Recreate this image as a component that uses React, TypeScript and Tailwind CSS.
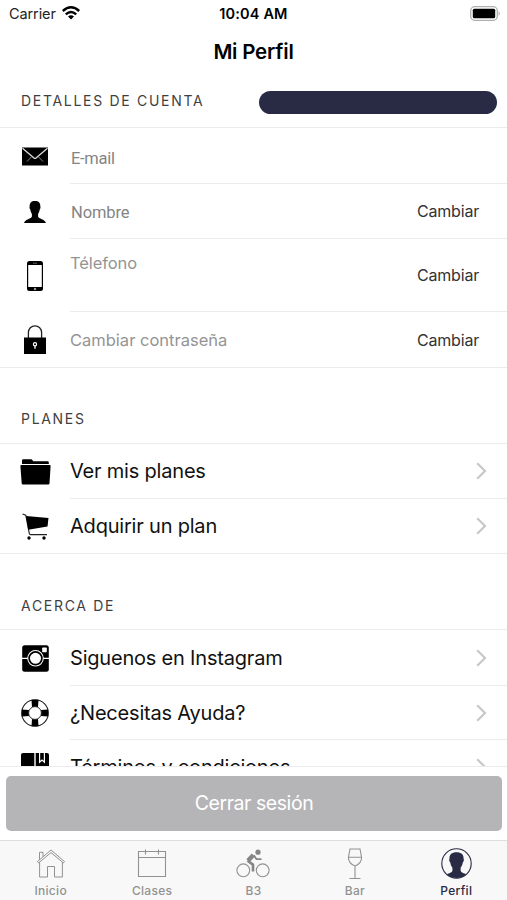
import type { ReactNode } from 'react';

function MailIcon() {
  return (
    <svg className="w-7 h-[19px]" viewBox="0 0 28 19">
      <rect x="1" y="0.5" width="26" height="18" fill="#000" />
      <path d="M1.5 1.2L13 11Q14 11.8 15 11L26.5 1.2" fill="none" stroke="#ddd" strokeWidth="1.3" />
      <path d="M6 14.5L10.5 9.8M22 14.5L17.5 9.8" fill="none" stroke="#999" strokeWidth="0.9" />
    </svg>
  );
}

function PersonShape({ fill }: { fill: string }) {
  return (
    <path
      d="M11 0C7.2 0 5.5 2 5.7 5.5C5.3 6 5.5 7.8 6.3 8.6C6.6 10.6 7.2 12 7.9 13V15.4C7.6 18 1 17.8 0 22H22C21 17.8 14.4 18 14.1 15.4V13C14.8 12 15.4 10.6 15.7 8.6C16.5 7.8 16.7 6 16.3 5.5C16.5 2 14.8 0 11 0Z"
      fill={fill}
    />
  );
}

function PersonIcon() {
  return (
    <svg className="w-[22px] h-[22px]" viewBox="0 0 22 22">
      <PersonShape fill="#000" />
    </svg>
  );
}

function PhoneIcon() {
  return (
    <svg className="w-4 h-[30px]" viewBox="0 0 16 30">
      <rect width="16" height="30" rx="2.5" fill="#000" />
      <rect x="1.2" y="4" width="13.6" height="22" fill="#fff" />
      <path d="M6 2.2H10" stroke="#777" strokeWidth="0.8" />
      <circle cx="8" cy="28" r="1.2" fill="#999" />
    </svg>
  );
}

function LockIcon() {
  return (
    <svg className="w-[22px] h-[29px]" viewBox="0 0 22 29">
      <path d="M4.4 13V7.5A6.6 6.6 0 0 1 17.6 7.5V13" fill="none" stroke="#222" strokeWidth="1.3" />
      <rect y="12.5" width="22" height="16.5" fill="#000" />
      <circle cx="11" cy="19.3" r="1.6" fill="none" stroke="#fff" strokeWidth="1.2" />
      <path d="M11 20.8V23.8" stroke="#fff" strokeWidth="1.3" />
    </svg>
  );
}

function FolderIcon() {
  return (
    <svg className="w-[31px] h-[26px]" viewBox="0 0 31 26">
      <path d="M2 5V1.5Q2 0.3 3.2 0.3H11Q12 0.3 12.5 1.2L13.2 2.3H27.5Q28.8 2.3 28.8 3.5V5Z" fill="#000" />
      <path d="M1.3 6H29.7Q30.7 6 30.6 7L29.5 24.5Q29.4 25.6 28.2 25.6H3Q1.8 25.6 1.7 24.5L0.4 7Q0.3 6 1.3 6Z" fill="#000" />
    </svg>
  );
}

function CartIcon() {
  return (
    <svg className="w-[27px] h-[27px]" viewBox="0 0 27 27">
      <path d="M0.5 1L3.8 2.2L7.3 20.5Q7.5 21.6 8.7 21.6H25" fill="none" stroke="#222" strokeWidth="1.2" />
      <path d="M4 3L26.5 5L25.5 13.5L6.2 16.8Z" fill="#000" />
      <circle cx="7" cy="25" r="1.7" fill="#000" />
      <circle cx="22" cy="25" r="1.7" fill="#000" />
    </svg>
  );
}

function InstagramIcon() {
  return (
    <svg className="w-[27px] h-[27px]" viewBox="0 0 27 27">
      <rect x="0.2" y="0.2" width="26.6" height="26.6" rx="2.5" fill="#000" />
      <path d="M0 13.3H6M21 13.3H27" stroke="#fff" strokeWidth="1.2" />
      <circle cx="13.5" cy="13.3" r="6.6" fill="#000" stroke="#fff" strokeWidth="3.4" />
      <circle cx="13.5" cy="13.3" r="6.4" fill="#fff" stroke="#000" strokeWidth="1.7" />
      <rect x="20.2" y="2.6" width="4.6" height="4.6" rx="0.6" fill="#fff" />
    </svg>
  );
}

function HelpIcon() {
  return (
    <svg className="w-7 h-7" viewBox="0 0 28 28">
      <circle cx="14" cy="14" r="13.3" fill="#fff" stroke="#222" strokeWidth="1.1" />
      <path d="M10.5 0.8H17.5L17 8H11ZM10.5 27.2H17.5L17 20H11ZM0.8 10.5V17.5L8 17V11ZM27.2 10.5V17.5L20 17V11Z" fill="#000" />
      <circle cx="14" cy="14" r="6.4" fill="#fff" stroke="#222" strokeWidth="1" />
    </svg>
  );
}

function BookIcon() {
  return (
    <svg className="w-7 h-7" viewBox="0 0 28 28">
      <rect width="28" height="28" rx="2" fill="#000" />
      <path d="M14 0V28" stroke="#fff" strokeWidth="1.4" />
      <path d="M18.6 0V9.2L21 7L23.4 9.2V0" fill="none" stroke="#fff" strokeWidth="1.2" />
    </svg>
  );
}

function Chevron() {
  return (
    <svg className="w-[11px] h-[18px]" viewBox="0 0 11 18">
      <path d="M1.2 1.2L9 9L1.2 16.8" fill="none" stroke="#c7c7cc" strokeWidth="2.2" />
    </svg>
  );
}

function HomeIcon() {
  return (
    <svg className="w-[30px] h-[30px]" viewBox="0 0 30 30" fill="none" stroke="#929292" strokeWidth="1">
      <path d="M1.5 12.5L15 1L28.5 12.5L27.4 13.9L15 3.6L2.6 13.9ZM3.5 10.8V3.3H7V7.8" />
      <path d="M3.6 13V28H11.5V17.5H18.5V28H26.4V13" />
    </svg>
  );
}

function CalendarIcon() {
  return (
    <svg className="w-[30px] h-[30px]" viewBox="0 0 30 30" fill="none" stroke="#929292" strokeWidth="1.1">
      <path d="M1.5 2.5H28.5V27.5H1.5ZM1.5 8.5H28.5M8.5 0.5V5.5M21.5 0.5V5.5" />
    </svg>
  );
}

function BikeIcon() {
  return (
    <svg className="w-[34px] h-[30px]" viewBox="0 0 34 30" fill="none" stroke="#929292">
      <circle cx="7.3" cy="21.3" r="6.4" strokeWidth="1.1" />
      <circle cx="26.7" cy="21.3" r="6.4" strokeWidth="1.1" />
      <circle cx="22" cy="3.2" r="2.6" fill="#858585" stroke="none" />
      <path d="M17.3 6L12 11.8" stroke="#858585" strokeWidth="4.4" />
      <path d="M11.5 11.8L17 15.6V22.5" stroke="#858585" strokeWidth="2.6" strokeLinejoin="round" />
      <path d="M17.8 6.3L20.5 10.2H25.5" stroke="#858585" strokeWidth="1.8" />
    </svg>
  );
}

function GlassIcon() {
  return (
    <svg className="w-4 h-8" viewBox="0 0 16 32" fill="none" stroke="#929292" strokeWidth="1.1">
      <path d="M3 1H13L14.6 9.5Q14.6 15.5 8 18Q1.4 15.5 1.4 9.5ZM1.5 9.3H14.5M8 18V30.5M2.5 30.5H13.5" />
    </svg>
  );
}

function ProfileIcon() {
  return (
    <svg className="w-[31px] h-[31px]" viewBox="0 0 31 31">
      <clipPath id="avatar">
        <circle cx="15.5" cy="15.5" r="14.6" />
      </clipPath>
      <g clipPath="url(#avatar)">
        <g transform="translate(0.9 4.2) scale(1.33 1.2)">
          <PersonShape fill="#292b44" />
        </g>
      </g>
      <circle cx="15.5" cy="15.5" r="14.7" fill="none" stroke="#292b44" strokeWidth="1.1" />
    </svg>
  );
}

function StatusBar() {
  return (
    <div className="h-7 px-[9px] grid grid-cols-3 items-center text-[14.5px]">
      <div className="flex items-center gap-1.5 text-[#222]">
        <span className="tracking-[-0.1px]">Carrier</span>
        <svg className="w-[18px] h-[14px] -mt-0.5" viewBox="0 0 18 14" fill="none" stroke="#000" strokeWidth="2.4">
          <path d="M0.8 5Q9 -2.4 17.2 5M3.8 8.3Q9 3.6 14.2 8.3" />
          <path d="M9 13.5L6 10.4Q9 7.9 12 10.4Z" fill="#000" stroke="none" />
        </svg>
      </div>
      <span className="text-center font-semibold tracking-[0.15px] whitespace-nowrap">10:04 AM</span>
      <svg className="w-[31px] h-[15px] ml-auto -mr-[3px] -mt-0.5" viewBox="0 0 31 15">
        <rect x="0.7" y="0.7" width="26.6" height="13.6" rx="4" fill="#fff" stroke="#b0b0b0" strokeWidth="1.3" />
        <rect x="2.8" y="2.8" width="22.4" height="9.4" rx="1.5" fill="#000" />
        <path d="M28.6 5Q31 7.5 28.6 10Z" fill="#aaa" />
      </svg>
    </div>
  );
}

function SectionTitle({ children }: { children: ReactNode }) {
  return <h2 className="text-[14px] leading-5 tracking-[1.7px] text-[#3f3f3f]">{children}</h2>;
}

type RowProps = {
  icon: ReactNode;
  height: string;
  last?: boolean;
  children: ReactNode;
};

function Row({ icon, height, last, children }: RowProps) {
  return (
    <div className={`flex ${height} ${last ? 'border-b border-[#ececee]' : ''}`}>
      <div className="w-[70px] shrink-0 flex items-center justify-center">{icon}</div>
      <div className={`flex-1 flex items-center justify-between ${last ? '' : 'border-b border-[#ececee]'}`}>{children}</div>
    </div>
  );
}

function ChangeButton() {
  return <button className="mr-7 text-[16px] leading-5 tracking-[-0.2px] text-[#333]">Cambiar</button>;
}

function LinkRow({ icon, label, height, last }: { icon: ReactNode; label: string; height: string; last?: boolean }) {
  return (
    <Row icon={icon} height={height} last={last}>
      <span className="text-[20px] leading-6 tracking-[-0.2px] text-[#111]">{label}</span>
      <span className="mr-5">
        <Chevron />
      </span>
    </Row>
  );
}

const tabs = [
  { label: 'Inicio', icon: <HomeIcon /> },
  { label: 'Clases', icon: <CalendarIcon /> },
  { label: 'B3', icon: <BikeIcon /> },
  { label: 'Bar', icon: <GlassIcon /> },
  { label: 'Perfil', icon: <ProfileIcon />, active: true },
];

export default function App() {
  return (
    <div className="w-[507px] h-[900px] bg-white flex flex-col overflow-hidden font-['Inter',sans-serif] text-black">
      <StatusBar />
      <h1 className="h-12 flex items-center justify-center text-[20.5px] font-semibold tracking-[-0.2px]">Mi Perfil</h1>

      <main className="h-[690px] overflow-hidden shrink-0">
        {/* Account details */}
        <div className="h-[52px] pl-[21px] pr-2.5 flex items-center justify-between border-b border-[#ececee]">
          <div className="-mt-0.5">
            <SectionTitle>DETALLES DE CUENTA</SectionTitle>
          </div>
          <div className="w-[238px] h-[23px] rounded-full bg-[#292b44] mt-0.5" />
        </div>
        <Row icon={<MailIcon />} height="h-14">
          <span className="pt-2 pl-px font-['Roboto',sans-serif] text-[16.5px] tracking-[-0.3px] text-[#858585]">E-mail</span>
        </Row>
        <Row icon={<PersonIcon />} height="h-[55px]">
          <span className="pt-1 pl-px font-['Roboto',sans-serif] text-[16.5px] tracking-[-0.1px] text-[#858585]">Nombre</span>
          <ChangeButton />
        </Row>
        <Row icon={<PhoneIcon />} height="h-[73px]">
          <span className="self-start pt-3 text-[16.5px] leading-6 tracking-[-0.1px] text-[#949494]">Télefono</span>
          <ChangeButton />
        </Row>
        <Row icon={<LockIcon />} height="h-14" last>
          <span className="text-[16.5px] leading-6 text-[#949494]">Cambiar contraseña</span>
          <ChangeButton />
        </Row>

        {/* Plans */}
        <div className="h-[76px] pl-[21px] pt-[41px] border-b border-[#ececee]">
          <SectionTitle>PLANES</SectionTitle>
        </div>
        <LinkRow icon={<FolderIcon />} label="Ver mis planes" height="h-[55px]" />
        <LinkRow icon={<CartIcon />} label="Adquirir un plan" height="h-[55px]" last />

        {/* About */}
        <div className="h-[76px] pl-[21px] pt-[42px] border-b border-[#ececee]">
          <SectionTitle>ACERCA DE</SectionTitle>
        </div>
        <LinkRow icon={<InstagramIcon />} label="Siguenos en Instagram" height="h-14" />
        <LinkRow icon={<HelpIcon />} label="¿Necesitas Ayuda?" height="h-[54px]" />
        <LinkRow icon={<BookIcon />} label="Términos y condiciones" height="h-[55px]" last />
      </main>

      <div className="h-[74px] shrink-0 border-t border-[#ececee] pt-[9px] pl-1.5 pr-[5px]">
        <button className="w-full h-[55px] rounded-[5px] bg-[#b5b5b7] text-white text-[19.5px] tracking-[-0.45px]">Cerrar sesión</button>
      </div>

      <nav className="h-[60px] shrink-0 grid grid-cols-5 bg-[#f8f8f8] border-t border-[#dedede]">
        {tabs.map((tab) => (
          <div key={tab.label} className="flex flex-col items-center">
            <div className="h-[42px] pt-[3px] flex items-center">{tab.icon}</div>
            <span className={`text-[12px] leading-4 font-medium tracking-[0.3px] ${tab.active ? 'text-[#292b44]' : 'text-[#929292]'}`}>
              {tab.label}
            </span>
          </div>
        ))}
      </nav>
    </div>
  );
}
